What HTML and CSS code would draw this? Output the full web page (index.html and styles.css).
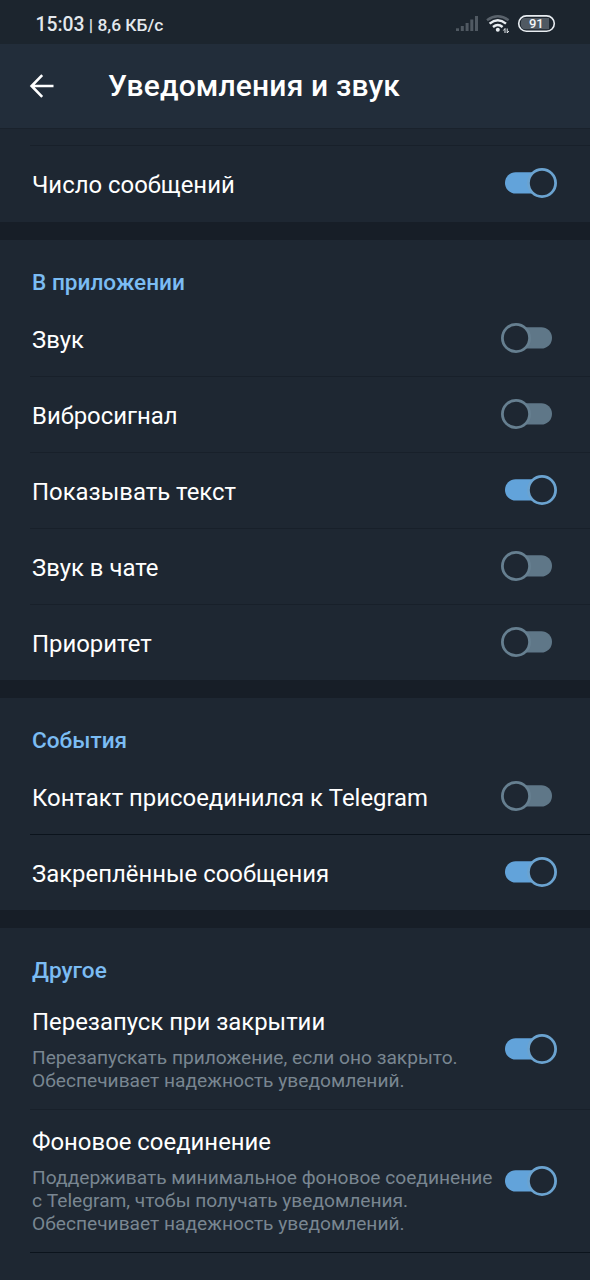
FILE: index.html
```html
<!DOCTYPE html>
<html lang="ru">
<head>
<meta charset="utf-8">
<title>Уведомления и звук</title>
<link rel="stylesheet" href="styles.css">
</head>
<body>
<svg class="defs" width="0" height="0" aria-hidden="true">
  <symbol id="on" viewBox="0 0 58 32"><rect x="5" y="5.2" width="42" height="21.4" rx="10.7" fill="#62a3da"/><circle cx="42" cy="16" r="13.6" fill="#1e2732" stroke="#6ba3d0" stroke-width="2.8"/></symbol>
  <symbol id="off" viewBox="0 0 58 32"><rect x="12" y="5.2" width="40" height="21.4" rx="10.7" fill="#5f7788"/><circle cx="16" cy="16" r="13.6" fill="#1e2732" stroke="#667f90" stroke-width="2.8"/></symbol>
</svg>
<div class="status">
  <span class="status-text"><span class="clock">15:03</span> | 8,6 КБ/с</span>
  <svg class="status-icons" width="104" height="24" viewBox="454 12 104 24">
    <g fill="#505962"><rect x="456" y="28.3" width="3" height="2.7"/><rect x="460.8" y="26" width="3" height="5"/><rect x="465.6" y="23" width="3" height="8"/><rect x="470.3" y="19.5" width="3" height="11.5"/><rect x="475" y="16" width="3" height="15"/></g>
    <g fill="none" stroke-width="2.5"><path d="M487 20.2Q497.8 12.4 508.6 20.2" stroke="#59626b"/><path d="M489.6 23.6Q497.8 17 506 23.6" stroke="#e8edf1"/><path d="M493 27Q497.8 23.1 502.6 27" stroke="#e8edf1"/></g>
    <circle cx="497.8" cy="29.8" r="2" fill="#e8edf1"/>
    <path d="M505 33v-4.5l-1.6 2M507.2 28.5v4.5l1.6-2" fill="none" stroke="#e8edf1"/>
    <rect x="518.7" y="15.9" width="35.6" height="15.4" rx="7.7" fill="none" stroke="#e8edf1" stroke-width="1.6"/>
    <path d="M524.5 18H549V29.2H524.5q-3.7 0-3.7-5.6t3.7-5.6" fill="#505962"/>
    <text x="536.3" y="28.2" class="battery" text-anchor="middle">91</text>
  </svg>
</div>
<header class="bar">
  <svg class="back" width="26" height="26" viewBox="0 0 26 26"><path d="M24.5 13H3M13.2 2.2L2.6 13l10.6 10.8" fill="none" stroke="#fff" stroke-width="2.6"/></svg>
  <h1>Уведомления и звук</h1>
</header>
<main>
  <section class="partial">
    <div class="row line"><span>Число сообщений</span><svg class="toggle"><use href="#on"/></svg></div>
  </section>
  <section>
    <h2>В приложении</h2>
    <div class="row"><span>Звук</span><svg class="toggle"><use href="#off"/></svg></div>
    <div class="row line"><span>Вибросигнал</span><svg class="toggle"><use href="#off"/></svg></div>
    <div class="row line"><span>Показывать текст</span><svg class="toggle"><use href="#on"/></svg></div>
    <div class="row line"><span>Звук в чате</span><svg class="toggle"><use href="#off"/></svg></div>
    <div class="row line"><span>Приоритет</span><svg class="toggle"><use href="#off"/></svg></div>
  </section>
  <section>
    <h2>События</h2>
    <div class="row"><span>Контакт присоединился к Telegram</span><svg class="toggle"><use href="#off"/></svg></div>
    <div class="row line dark"><span>Закреплённые сообщения</span><svg class="toggle"><use href="#on"/></svg></div>
  </section>
  <section class="last">
    <h2>Другое</h2>
    <div class="row detail"><div><span>Перезапуск при закрытии</span><p>Перезапускать приложение, если оно закрыто.<br>Обеспечивает надежность уведомлений.</p></div><svg class="toggle"><use href="#on"/></svg></div>
    <div class="row detail tall line"><div><span>Фоновое соединение</span><p>Поддерживать минимальное фоновое соединение<br>с Telegram, чтобы получать уведомления.<br>Обеспечивает надежность уведомлений.</p></div><svg class="toggle"><use href="#on"/></svg></div>
    <div class="end line dark"></div>
  </section>
</main>
</body>
</html>
```
FILE: styles.css
```css
* { box-sizing: border-box; }
body { margin: 0; height: 1280px; overflow: hidden; background: #171e27; color: #fff; font-family: Roboto, sans-serif; }
.defs { position: absolute; }
.status { height: 44px; padding: 0 32px 0 35.5px; background: #1c252e; display: flex; align-items: center; justify-content: space-between; }
.status-text { font-size: 17.4px; font-weight: 500; color: #e3e8ed; padding-top: 5px; white-space: nowrap; }
.clock { font-size: 19.3px; }
.status-icons { margin-top: 4px; }
.battery { font: 500 13px Roboto, sans-serif; fill: #f2f5f7; }
.bar { height: 84px; background: #222d3a; display: flex; align-items: center; padding-left: 29px; }
.back { flex: none; }
h1 { margin: 0 0 2px 53px; font-size: 30px; letter-spacing: 0.15px; font-weight: 500; white-space: nowrap; }
main { display: flex; flex-direction: column; gap: 18px; }
section { background: #1e2732; }
.partial { padding-top: 16px; border-top: 1px solid #1a222c; height: 94px; }
h2 { margin: 0; height: 61px; padding: 29px 0 0 32px; font-size: 22.6px; line-height: 28px; font-weight: 500; color: #7bbcf3; }
.row { height: 76px; margin-left: 30px; padding: 0 32px 0 2px; display: flex; align-items: center; justify-content: space-between; font-size: 23.9px; line-height: 30px; white-space: nowrap; }
.row > span { padding-top: 2px; }
section > h2 + .row { height: 75px; }
.line { border-top: 1px solid #18202a; }
.dark { border-top-color: #0b131c; }
.toggle { width: 58px; height: 32px; flex: none; margin-bottom: 1px; }
section > h2 + .detail { height: 120px; }
.detail { align-items: flex-start; padding-top: 18px; }
.detail.tall { height: 143px; padding-top: 17px; }
.detail > div { width: 468px; }
.detail span { display: block; }
.detail p { margin: 9px 0 0; font-size: 19.17px; line-height: 23px; color: #798691; }
.detail .toggle { margin-top: 26px; }
.tall .toggle { margin-top: 38px; }
.last { height: 352px; }
.end { margin-left: 30px; }
```
